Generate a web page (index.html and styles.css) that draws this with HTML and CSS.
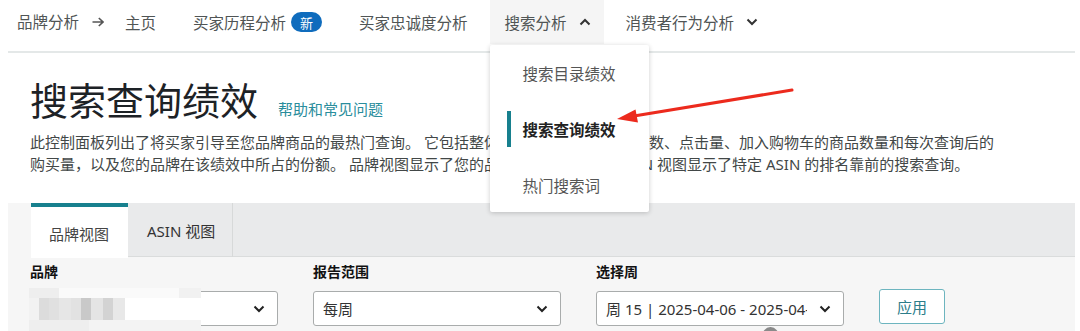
FILE: index.html
```html
<!DOCTYPE html>
<html lang="zh-CN">
<head>
<meta charset="utf-8">
<title>搜索查询绩效</title>
<link rel="stylesheet" href="styles.css">
</head>
<body>
<div class="page">
  <nav class="topnav">
    <span class="crumb">品牌分析</span>
    <svg class="crumb-arrow" width="12" height="10" viewBox="0 0 12 10"><path d="M0.5 5H11M6.8 1L11 5L6.8 9" fill="none" stroke="#555" stroke-width="1.6"/></svg>
    <a class="nav-item home">主页</a>
    <a class="nav-item">买家历程分析<span class="badge">新</span></a>
    <a class="nav-item">买家忠诚度分析</a>
    <div class="nav-item active">搜索分析<svg class="chev" width="12" height="8" viewBox="0 0 12 8"><path d="M1.5 6.5L6 2L10.5 6.5" fill="none" stroke="#333" stroke-width="2"/></svg>
      <div class="dropdown">
        <div class="dd-item">搜索目录绩效</div>
        <div class="dd-item current">搜索查询绩效</div>
        <div class="dd-item">热门搜索词</div>
      </div>
    </div>
    <a class="nav-item">消费者行为分析<svg class="chev" width="12" height="8" viewBox="0 0 12 8"><path d="M1.5 1.5L6 6L10.5 1.5" fill="none" stroke="#333" stroke-width="2"/></svg></a>
  </nav>
  <div class="rule"></div>

  <header class="title-block">
    <h1 class="title">搜索查询绩效<a class="help">帮助和常见问题</a></h1>
    <p class="desc">此控制面板列出了将买家引导至您品牌商品的最热门查询。 它包括整体搜索查询数量、展示次数、点击量、加入购物车的商品数量和每次查询后的<br>购买量，以及您的品牌在该绩效中所占的份额。 品牌视图显示了您的品牌排名靠前查询，ASIN 视图显示了特定 ASIN 的排名靠前的搜索查询。</p>
  </header>

  <section class="panel">
    <div class="tabs">
      <div class="tab active">品牌视图</div>
      <div class="tab">ASIN 视图</div>
    </div>
    <div class="filters">
      <div class="field">
        <div class="label">品牌</div>
        <div class="select brand">
          <span class="mosaic"></span>
          <span class="sel-text"></span>
          <svg class="sel-chev" width="12" height="8" viewBox="0 0 12 8"><path d="M1.5 1.5L6 6L10.5 1.5" fill="none" stroke="#222" stroke-width="2"/></svg>
        </div>
      </div>
      <div class="field">
        <div class="label">报告范围</div>
        <div class="select">
          <span class="sel-text">每周</span>
          <svg class="sel-chev" width="12" height="8" viewBox="0 0 12 8"><path d="M1.5 1.5L6 6L10.5 1.5" fill="none" stroke="#222" stroke-width="2"/></svg>
        </div>
      </div>
      <div class="field">
        <div class="label">选择周</div>
        <div class="select">
          <span class="sel-text clip">周 15 | 2025-04-06 - 2025-04-12</span>
          <svg class="sel-chev" width="12" height="8" viewBox="0 0 12 8"><path d="M1.5 1.5L6 6L10.5 1.5" fill="none" stroke="#222" stroke-width="2"/></svg>
        </div>
      </div>
      <button class="apply">应用</button>
    </div>
    <div class="peek">
      <span class="peek-icon"></span>
      <span class="peek-text">显示 品牌 的 搜索 查询 数据</span>
    </div>
  </section>

  <svg class="annotation" width="1080" height="331" viewBox="0 0 1080 331">
    <line x1="792" y1="90" x2="634" y2="116" stroke="#ec2a1d" stroke-width="3" stroke-linecap="round"/>
    <polygon points="617,119 635.5,109.5 638,122.5" fill="#ec2a1d"/>
  </svg>
</div>
</body>
</html>
```

FILE: styles.css
```css
* { box-sizing: border-box; }

html, body {
  margin: 0;
  padding: 0;
  background: #fff;
}

body {
  font-family: "Noto Sans", "Noto Sans CJK SC", sans-serif;
  color: #444;
  width: 1080px;
  height: 331px;
  overflow: hidden;
}

.page {
  position: relative;
  padding: 0 5px 0 8px;
}

/* top navigation */
.topnav {
  display: flex;
  align-items: center;
  height: 44px;
  padding-left: 9px;
  font-size: 15.5px;
  color: #505555;
}

.crumb { line-height: 44px; }

.crumb-arrow { margin-left: 13px; }

.nav-item {
  position: relative;
  display: flex;
  align-items: center;
  height: 44px;
  padding: 0 15px;
  margin-left: 7px;
  color: #505555;
  text-decoration: none;
  white-space: nowrap;
}

.nav-item.home { margin-left: 6px; }

.badge {
  display: inline-flex;
  align-items: center;
  justify-content: center;
  width: 31px;
  height: 20px;
  margin-left: 5px;
  border-radius: 10px;
  background: #0f6cbd;
  color: #fff;
  font-size: 13px;
}

.nav-item.active {
  background: #f5f5f5;
  padding-right: 13px;
}

.chev { margin-left: 12px; }

/* dropdown menu */
.dropdown {
  position: absolute;
  left: 0;
  top: 45px;
  width: 159px;
  height: 167px;
  background: #fff;
  border-radius: 2px;
  box-shadow: 0 1px 5px rgba(0, 0, 0, 0.2);
  z-index: 5;
}

.dd-item {
  position: relative;
  height: 56px;
  display: flex;
  align-items: center;
  padding-left: 33px;
  color: #555;
  font-size: 15.5px;
}

.dd-item.current {
  color: #222;
  font-weight: 700;
}

.dd-item.current::before {
  content: "";
  position: absolute;
  left: 17px;
  top: 10px;
  width: 4px;
  height: 36px;
  background: #17808e;
}

.rule {
  height: 2px;
  margin-top: 7px;
  background: #e4e8e8;
}

/* title */
.title-block {
  padding-left: 22px;
  padding-top: 24px;
}

.title {
  margin: 0;
  font-size: 38px;
  line-height: 46px;
  font-weight: 400;
  color: #1d2226;
}

.help {
  margin-left: 20px;
  font-size: 15px;
  line-height: 1;
  color: #2a8d9c;
  text-decoration: none;
}

.desc {
  margin: 8px 0 0;
  font-size: 15px;
  line-height: 22px;
  color: #424747;
  white-space: nowrap;
}

/* panel */
.panel {
  margin-top: 28px;
  background: #f6f6f6;
  height: 130px;
  overflow: hidden;
}

.tabs {
  display: flex;
  margin-left: 23px;
  height: 54px;
  background: #e9eaeb;
  border-bottom: 1px solid #dadcdc;
}

.tab {
  display: flex;
  align-items: center;
  height: 54px;
  padding-left: 19px;
  width: 105px;
  font-size: 15px;
  color: #333;
  border-right: 1px solid #d7d9d9;
}

.tab.active {
  width: 97px;
  padding-left: 18px;
  padding-top: 2px;
  background: #fff;
  border-top: 4px solid #17808e;
  border-right: none;
  height: 55px;
  color: #444;
}

.filters {
  display: flex;
  align-items: flex-start;
  gap: 35px;
  padding: 5px 0 0 22px;
}

.label {
  font-size: 14px;
  line-height: 20px;
  font-weight: 700;
  color: #111;
}

.select {
  position: relative;
  display: flex;
  align-items: center;
  width: 248px;
  height: 35px;
  margin-top: 9px;
  padding: 0 12px 0 9px;
  background: #fff;
  border: 1px solid #a9acac;
  border-radius: 3px;
  font-size: 15px;
  color: #333;
}

.sel-text {
  flex: 1;
  min-width: 0;
  white-space: nowrap;
  overflow: hidden;
}

.sel-text.clip { margin-right: 12px; }

.sel-chev { flex: none; }

.mosaic {
  position: absolute;
  left: -2px;
  top: -4px;
  width: 172px;
  height: 44px;
  background:
    linear-gradient(90deg, #eeeeee 0 30px, #fafafa 30px 150px, #f1f1f1 150px) 0 0 / 100% 10px no-repeat,
    linear-gradient(90deg, #f2f2f2 0 10px, #dcdcdc 10px 20px, #e0e0e0 20px 30px, #e6e6e6 30px 42px, #e2e2e2 42px 52px, #c9c9c9 52px 62px, #e4e4e4 62px 74px, #d3d3d3 74px 84px, #e8e8e8 84px 96px, #ffffff 96px) 0 10px / 100% 22px no-repeat,
    linear-gradient(90deg, #eeeeee 0 60px, #f3f3f3 60px 172px) 0 32px / 100% 12px no-repeat;
}

.apply {
  margin-top: 27px;
  width: 66px;
  height: 35px;
  background: #fff;
  border: 1.5px solid #6db5bf;
  border-radius: 3px;
  font-family: inherit;
  font-size: 15px;
  color: #2b7d8a;
}

.peek {
  display: flex;
  align-items: flex-start;
  margin-top: 1px;
  padding-left: 754px;
  height: 20px;
}

.peek-icon {
  width: 20px;
  height: 20px;
  border-radius: 50%;
  background: #8a8a8a;
}

.peek-text {
  margin-left: 36px;
  margin-top: 2px;
  font-size: 15px;
  color: #999;
  letter-spacing: 8px;
}

.annotation {
  position: absolute;
  left: 0;
  top: 0;
  pointer-events: none;
  z-index: 10;
}
```
